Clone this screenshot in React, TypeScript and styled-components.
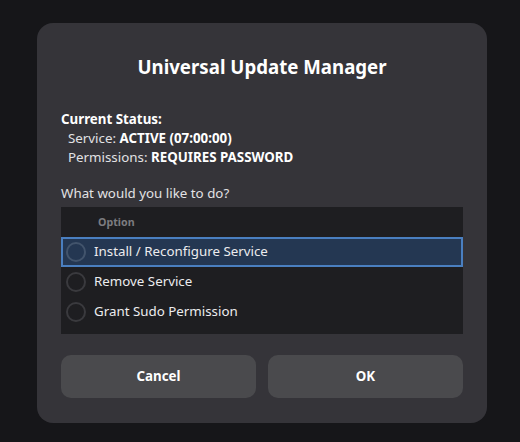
import React, { useState } from "react";
import styled, { createGlobalStyle } from "styled-components";

const GlobalStyle = createGlobalStyle`
  html, body {
    margin: 0;
    padding: 0;
    background: #161619;
    font-family: "Noto Sans", "Open Sans", sans-serif;
    color: #ececee;
  }
`;

const options = [
  "Install / Reconfigure Service",
  "Remove Service",
  "Grant Sudo Permission",
];

const App = () => {
  const [selected, setSelected] = useState(0);
  return (
    <Page>
      <GlobalStyle />
      <Dialog>
        <Title>Universal Update Manager</Title>
        <Status>
          <StatusHead>Current Status:</StatusHead>
          <StatusLine>
            Service: <b>ACTIVE (07:00:00)</b>
          </StatusLine>
          <StatusLine>
            Permissions: <b>REQUIRES PASSWORD</b>
          </StatusLine>
        </Status>
        <Question>What would you like to do?</Question>
        <List>
          <Header>Option</Header>
          {options.map((o, i) => (
            <Row key={o} $active={i === selected} onClick={() => setSelected(i)}>
              <Radio $active={i === selected} />
              <span>{o}</span>
            </Row>
          ))}
        </List>
        <Buttons>
          <Button>Cancel</Button>
          <Button>OK</Button>
        </Buttons>
      </Dialog>
    </Page>
  );
};

export default App;

const Page = styled.div`
  width: 520px;
  height: 442px;
  padding: 23px 0 0 37px;
  box-sizing: border-box;
`;

const Dialog = styled.div`
  width: 450px;
  height: 400px;
  box-sizing: border-box;
  background: #353439;
  border-radius: 16px;
  padding: 32px 24px 25px;
  display: flex;
  flex-direction: column;
`;

const Title = styled.div`
  font-size: 18.67px;
  font-weight: 700;
  line-height: 24px;
  text-align: center;
  color: #ffffff;
`;

const Status = styled.div`
  margin-top: 31px;
  font-size: 13.33px;
  line-height: 19px;
  b {
    font-weight: 700;
    color: #ffffff;
  }
`;

const StatusHead = styled.div`
  font-weight: 700;
  color: #ffffff;
`;

const StatusLine = styled.div`
  padding-left: 7px;
  color: #e2e2e4;
`;

const Question = styled.div`
  margin-top: 17px;
  font-size: 13.33px;
  line-height: 19px;
  color: #e2e2e4;
`;

const List = styled.div`
  margin-top: 4px;
  background: #1e1e21;
  height: 127px;
  padding-bottom: 7px;
  box-sizing: border-box;
  display: flex;
  flex-direction: column;
`;

const Header = styled.div`
  height: 30px;
  line-height: 30px;
  padding-left: 37px;
  font-size: 10.67px;
  font-weight: 700;
  color: #7c7c80;
`;

const Row = styled.div<{ $active: boolean }>`
  height: 30px;
  box-sizing: border-box;
  display: flex;
  align-items: center;
  gap: 8px;
  padding: 0 0 2px 3px;
  font-size: 13.33px;
  color: #ececee;
  cursor: default;
  background: ${(p) => (p.$active ? "#243752" : "transparent")};
  border: 2px solid ${(p) => (p.$active ? "#4a7fc0" : "transparent")};
`;

const Radio = styled.span<{ $active: boolean }>`
  width: 20px;
  height: 20px;
  margin-top: 2px;
  box-sizing: border-box;
  border-radius: 50%;
  border: 2px solid ${(p) => (p.$active ? "#42546c" : "#3a3a3e")};
`;

const Buttons = styled.div`
  margin-top: auto;
  display: grid;
  grid-template-columns: 1fr 1fr;
  gap: 12px;
`;

const Button = styled.button`
  height: 43px;
  padding-bottom: 2px;
  border: none;
  border-radius: 10px;
  background: #4a4a4d;
  color: #ffffff;
  font-family: "Noto Sans", "Open Sans", sans-serif;
  font-size: 13.33px;
  font-weight: 700;
`;
